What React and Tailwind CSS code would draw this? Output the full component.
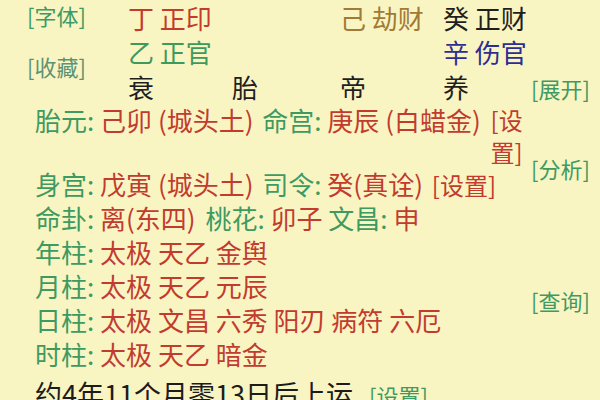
import React from 'react';

const G = 'text-[#3f9a62]';
const R = 'text-[#c23b2f]';

const topGrid = [
  [
    { t: '丁 正印', c: 'text-[#c53a2c]' },
    null,
    { t: '己 劫财', c: 'text-[#a17a35]' },
    { t: '癸 正财', c: 'text-[#1f1f1f]' },
  ],
  [
    { t: '乙 正官', c: 'text-[#3e9a5c]' },
    null,
    null,
    { t: '辛 伤官', c: 'text-[#2e2e92]' },
  ],
  [
    { t: '衰', c: 'text-[#1f1f1f]' },
    { t: '胎', c: 'text-[#1f1f1f]' },
    { t: '帝', c: 'text-[#1f1f1f]' },
    { t: '养', c: 'text-[#1f1f1f]' },
  ],
];

const pillars = [
  ['年柱:', '太极 天乙 金舆'],
  ['月柱:', '太极 天乙 元辰'],
  ['日柱:', '太极 文昌 六秀 阳刃 病符 六厄'],
  ['时柱:', '太极 天乙 暗金'],
];

export default function App() {
  return (
    <div
      className="w-[600px] h-[400px] overflow-hidden bg-[#f9f5c3] flex"
      style={{ fontFamily: '"Noto Sans CJK SC", "Noto Sans", sans-serif' }}
    >
      {/* main column */}
      <div className="w-[531px] shrink-0">
        {/* top: labels + stems */}
        <div className="flex h-[104px]">
          <div className="w-[128px] pl-[27px] text-[22px] leading-[30px] flex flex-col">
            <span className={G}>[字体]</span>
            <span className="mt-[21px] text-[#5d9274]">[收藏]</span>
          </div>
          <div className="grid grid-cols-[104px_108px_103px_88px] grid-rows-[34px_34px_35px] pt-[1px] text-[26px] leading-none">
            {topGrid.map((row, i) =>
              row.map((cell, j) => (
                <div key={`${i}-${j}`} className="flex items-center whitespace-pre">
                  {cell && <span className={cell.c}>{cell.t}</span>}
                </div>
              ))
            )}
          </div>
        </div>

        {/* details */}
        <div className="pl-[35px] text-[26px]">
          <div className="flex leading-[32px]">
            <div className="whitespace-pre">
              <span className={G}>胎元: </span>
              <span className={`mr-[3px] ${R}`}>己卯 (城头土) </span>
              <span className={G}>命宫: </span>
              <span className={`mr-[4px] ${R}`}>庚辰 (白蜡金) </span>
            </div>
            <div className={`w-[34px] text-[24px] ${R}`}>[设置]</div>
          </div>
          <div className="leading-[32px] whitespace-pre">
            <span className={G}>身宫: </span>
            <span className={`mr-[3px] ${R}`}>戊寅 (城头土) </span>
            <span className={G}>司令: </span>
            <span className={`mr-[3px] ${R}`}>癸(真诠) </span>
            <span className={`text-[24px] ${R}`}>[设置]</span>
          </div>
          <div className="leading-[34px] whitespace-pre">
            <span className={G}>命卦: </span>
            <span className={`mr-[4px] ${R}`}>离(东四) </span>
            <span className={G}>桃花: </span>
            <span className={R}>卯子 </span>
            <span className={G}>文昌: </span>
            <span className={R}>申</span>
          </div>
          {pillars.map(([k, v]) => (
            <div key={k} className="leading-[34px] whitespace-pre">
              <span className={G}>{k} </span>
              <span className={R}>{v}</span>
            </div>
          ))}
          <div className="mt-[6px] leading-[34px] whitespace-pre text-[27px] text-[#1c1c1c]">
            约4年11个月零13日后上运 <span className={`ml-[10px] text-[22px] ${G}`}>[设置]</span>
          </div>
        </div>
      </div>

      {/* right column actions */}
      <div className={`flex flex-col pt-[73px] text-[22px] leading-[30px] ${G}`}>
        <span>[展开]</span>
        <span className="mt-[50px]">[分析]</span>
        <span className="mt-[102px]">[查询]</span>
      </div>
    </div>
  );
}
